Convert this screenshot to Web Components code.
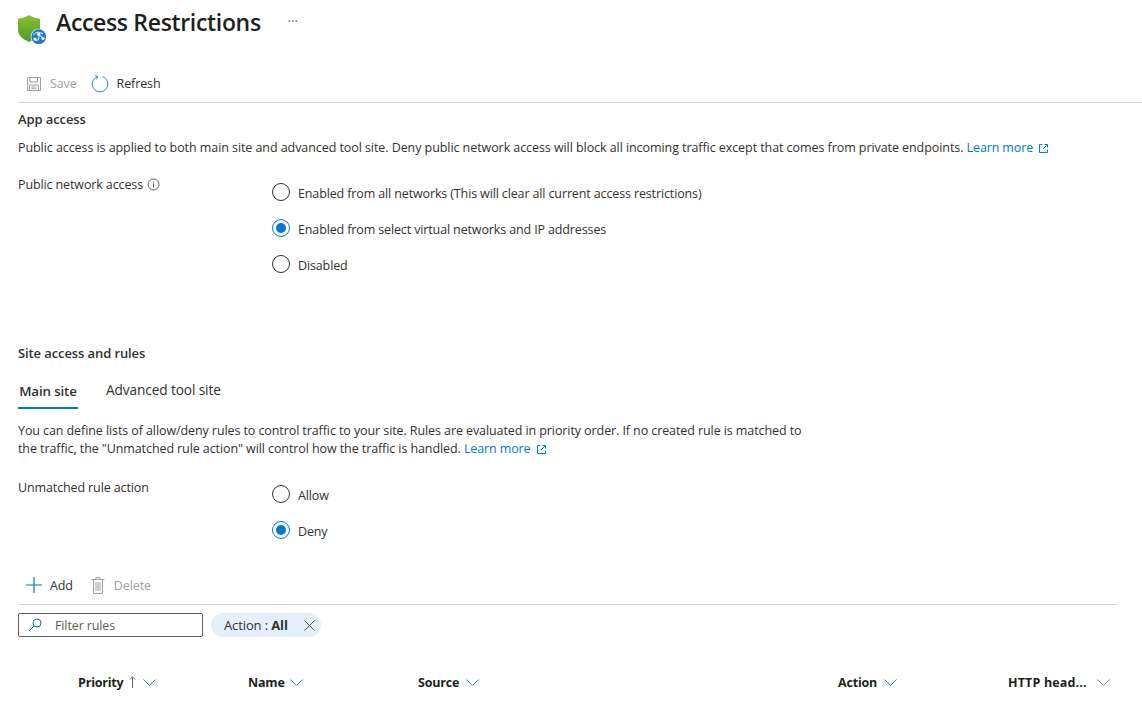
<!DOCTYPE html>
<html>
<head>
<meta charset="utf-8">
<title>Access Restrictions</title>
<style>
html,body{margin:0;height:703px;overflow:hidden;background:#fff;}
body{font-family:"Open Sans","Noto Sans",sans-serif;font-size:12.5px;letter-spacing:-.12px;color:#323130;}
</style>
</head>
<body>
<page-header>Access Restrictions</page-header>
<command-bar class="top">
  <command-button icon="save" disabled>Save</command-button>
  <command-button icon="refresh">Refresh</command-button>
</command-bar>

<page-section heading="App access" style="--head-top:7px">
  <text-block style="--top:11px">Public access is applied to both main site and advanced tool site. Deny public network access will block all incoming traffic except that comes from private endpoints. <learn-more></learn-more></text-block>
  <form-field label="Public network access" info style="--top:18px;--height:169px">
    <radio-option>Enabled from all networks (This will clear all current access restrictions)</radio-option>
    <radio-option checked>Enabled from select virtual networks and IP addresses</radio-option>
    <radio-option>Disabled</radio-option>
  </form-field>
</page-section>

<page-section heading="Site access and rules" style="--head-top:0px">
  <tab-strip></tab-strip>
  <text-block style="--top:13px;--width:800px;--spacing:-.09px">You can define lists of allow/deny rules to control traffic to your site. Rules are evaluated in priority order. If no created rule is matched to the traffic, the "Unmatched rule action" will control how the traffic is handled. <learn-more></learn-more></text-block>
  <form-field label="Unmatched rule action" style="--top:20px;--height:88px;--radio-top:7px">
    <radio-option>Allow</radio-option>
    <radio-option checked>Deny</radio-option>
  </form-field>
</page-section>

<command-bar class="rules">
  <command-button icon="add">Add</command-button>
  <command-button icon="delete" disabled>Delete</command-button>
</command-bar>
<filter-row></filter-row>
<rules-header></rules-header>

<script>
const ICONS = {
  save:`<svg width="16" height="16" viewBox="0 0 16 16" fill="none" stroke="#a19f9d" stroke-width="1"><path d="M1.500 1.500h13v13h-13z"/><path d="M4 1.500v4.500h7.500V1.500M3.500 14.500V9h9v5.500M5.500 11h5M5.500 12.700h5"/></svg>`,
  refresh:`<svg width="18" height="18" viewBox="0 0 18 18" fill="none" stroke="#1a86d9" stroke-width="1"><path d="M6.300 1.700A7.800 7.800 0 1 0 11.500 1.600"/><path d="M4.200 .5 6.800 1.700 5.600 4.300" stroke-linejoin="round"/></svg>`,
  add:`<svg width="16" height="16" viewBox="0 0 16 16" fill="none" stroke="#0078d4" stroke-width="1.200"><path d="M8 0v16M0 8h16"/></svg>`,
  delete:`<svg width="14" height="17" viewBox="0 0 14 17" fill="none" stroke="#a19f9d"><path d="M.5 2.500h13M2.500 2.500v14h9v-14M5 2.500v-2h4v2M5 5v9M7 5v9M9 5v9"/></svg>`
};

const link = `<svg width="9" height="9" viewBox="0 0 9 9" fill="none" stroke="#0078d4"><path d="M3.500.5H.5v8h8v-3M4 5 8.300.7M5.500.5h3v3"/></svg>`;

class PageHeader extends HTMLElement {
  constructor(){
    super();
    this.attachShadow({mode:'open'}).innerHTML = `
    <style>
    :host{display:flex;align-items:flex-start;height:59px;padding-left:18px;}
    svg{margin-top:15px;flex:none;}
    h1{margin:5px 0 0 8px;font:600 23px/34px "Open Sans",sans-serif;letter-spacing:-.33px;color:#201f1e;}
    span{margin:14px 0 0 27px;font-size:12px;line-height:16px;color:#605e5c;letter-spacing:.3px;}
    </style>
    <svg width="30" height="30" viewBox="0 0 30 30">
      <defs><linearGradient id="g" x1="0" y1="0" x2="0" y2="1"><stop offset="0" stop-color="#86c232"/><stop offset="1" stop-color="#4f9a2a"/></linearGradient></defs>
      <path d="M11 0c2.500 2 6 3.200 10 3.400.7 0 1 .3 1 1v10.100c0 6-4.500 9.500-11 12.500C4.500 24 0 20.500 0 14.500V4.400c0-.7.3-1 1-1C5 3.200 8.500 2 11 0z" fill="url(#g)"/>
      <circle cx="20.700" cy="21.700" r="8" fill="#fff"/>
      <circle cx="20.700" cy="21.700" r="7.400" fill="#1f77d0"/>
      <path d="M15.500 20c2-3 6-4 9.500-1M17 25c3 1 5-1 3.500-5.500M21 20c2 1 3 3 5.500 3" stroke="#cfe6fb" stroke-width="1.100" fill="none"/>
      <circle cx="20.700" cy="19.300" r="1.600" fill="#fff"/><circle cx="17" cy="24" r="1.600" fill="#fff"/><circle cx="25" cy="23.500" r="1.600" fill="#fff"/>
    </svg>
    <h1><slot></slot></h1>
    <span>···</span>`;
  }
}

class CommandBar extends HTMLElement {
  constructor(){
    super();
    this.attachShadow({mode:'open'}).innerHTML = `
    <style>
    :host{display:flex;align-items:center;gap:14px;height:43px;margin-left:18px;border-bottom:1px solid #d6d6d6;padding-left:8px;}
    :host(.top){box-sizing:border-box;height:44px;padding-top:6px;}
    :host(.rules){margin-right:24px;height:38px;gap:18px;padding-left:8px;}
    </style>
    <slot></slot>`;
  }
}

class CommandButton extends HTMLElement {
  constructor(){
    super();
    this.attachShadow({mode:'open'}).innerHTML = `
    <style>
    :host{display:inline-flex;align-items:center;gap:8px;color:#323130;}
    :host([disabled]){color:#a19f9d;}
    :host([icon=delete]){gap:9px;}
    #i{display:flex;}
    </style>
    <span id="i">${ICONS[this.getAttribute('icon')]||''}</span><slot></slot>`;
  }
}

class PageSection extends HTMLElement {
  constructor(){
    super();
    this.attachShadow({mode:'open'}).innerHTML = `
    <style>
    :host{display:block;padding-left:18px;}
    h2{margin:var(--head-top,0) 0 0;font:600 13px/18px "Open Sans",sans-serif;letter-spacing:-.1px;color:#323130;}
    </style>
    <h2>${this.getAttribute('heading')}</h2>
    <slot></slot>`;
  }
}

class TextBlock extends HTMLElement {
  constructor(){
    super();
    this.attachShadow({mode:'open'}).innerHTML = `
    <style>
    :host{display:block;margin-top:var(--top,0);max-width:var(--width,none);line-height:18px;letter-spacing:var(--spacing,-.07px);color:#323130;}
    </style>
    <slot></slot>`;
  }
}

class LearnMore extends HTMLElement {
  constructor(){
    super();
    this.attachShadow({mode:'open'}).innerHTML = `
    <style>
    :host{display:inline;color:#0078d4;letter-spacing:-.12px;}
    svg{margin-left:3px;vertical-align:-1px;}
    </style>
    Learn more ${link}`;
  }
}

class FormField extends HTMLElement {
  constructor(){
    super();
    const info = this.hasAttribute('info') ? `<svg width="13" height="13" viewBox="0 0 13 13" fill="none" stroke="#605e5c"><circle cx="6.500" cy="6.500" r="5.500"/><path d="M6.500 5.500v4M6.500 3.500v1"/></svg>` : '';
    this.attachShadow({mode:'open'}).innerHTML = `
    <style>
    :host{display:grid;grid-template-columns:254px 1fr;margin-top:var(--top,0);height:var(--height,auto);}
    #l{display:flex;align-items:center;gap:4px;height:18px;color:#323130;}
    #r{display:flex;flex-direction:column;gap:16px;padding-top:var(--radio-top,8px);}
    </style>
    <div id="l">${this.getAttribute('label')}${info}</div>
    <div id="r"><slot></slot></div>`;
  }
}

class RadioOption extends HTMLElement {
  constructor(){
    super();
    const checked = this.hasAttribute('checked');
    this.attachShadow({mode:'open'}).innerHTML = `
    <style>
    :host{display:flex;align-items:center;gap:8px;height:20px;letter-spacing:-.13px;}
    i{box-sizing:border-box;width:18px;height:18px;margin-top:-2px;border-radius:50%;border:1px solid ${checked?'#0078d4':'#323130'};display:flex;align-items:center;justify-content:center;}
    b{width:10px;height:10px;border-radius:50%;background:#0078d4;display:${checked?'block':'none'};}
    </style>
    <i><b></b></i><span><slot></slot></span>`;
  }
}

class TabStrip extends HTMLElement {
  constructor(){
    super();
    this.attachShadow({mode:'open'}).innerHTML = `
    <style>
    :host{display:flex;gap:28px;margin-top:12px;height:35px;}
    div{display:flex;align-items:center;height:33px;}
    .on{width:60px;font-size:13.300px;font-weight:600;color:#323130;border-bottom:2px solid #0078d4;justify-content:center;}
    .off{height:31px;font-size:13.700px;}
    </style>
    <div class="on">Main site</div><div class="off">Advanced tool site</div>`;
  }
}

class FilterRow extends HTMLElement {
  constructor(){
    super();
    this.attachShadow({mode:'open'}).innerHTML = `
    <style>
    :host{display:flex;align-items:center;gap:8px;margin:8px 0 0 18px;height:24px;}
    #f{box-sizing:border-box;width:185px;height:24px;border:1px solid #605e5c;border-radius:2px;display:flex;align-items:center;gap:13px;padding-left:9px;color:#605e5c;}
    #p{display:flex;align-items:center;height:24px;background:#e3f0fb;border-radius:12px;padding:0 6px 0 13px;gap:16px;color:#323130;font-size:13px;}
    b{font-weight:700;}
    svg{display:block;}
    </style>
    <div id="f">
      <svg width="14" height="14" viewBox="0 0 14 14" fill="none" stroke="#0078d4"><circle cx="9" cy="5" r="4"/><path d="M6 8 1 13"/></svg>
      <span>Filter rules</span>
    </div>
    <div id="p">
      <span>Action : <b>All</b></span>
      <svg width="11" height="11" viewBox="0 0 11 11" fill="none" stroke="#605e5c"><path d="M.5.5l10 10M10.500.5l-10 10"/></svg>
    </div>`;
  }
}

class RulesHeader extends HTMLElement {
  constructor(){
    super();
    const chev = c => `<svg width="13" height="7" viewBox="0 0 13 7" fill="none" stroke="${c}"><path d="M.5.5l6 6 6-6"/></svg>`;
    const up = `<svg class="up" width="7" height="12" viewBox="0 0 7 12" fill="none" stroke="#7a5a6a"><path d="M3.500 12V1M.8 3.500 3.500 .8 6.200 3.500"/></svg>`;
    const blue = '#2f7fb8';
    this.attachShadow({mode:'open'}).innerHTML = `
    <style>
    :host{display:grid;grid-template-columns:170px 170px 420px 170px 1fr;margin:36px 0 0 78px;height:18px;font-weight:700;letter-spacing:-.2px;color:#201f1e;}
    div{display:flex;align-items:center;gap:7px;}
    .up{margin:0 0 0 -2px;}
    .n{gap:5px;}
    .h{gap:10px;letter-spacing:.15px;}
    </style>
    <div>Priority ${up}${chev(blue)}</div>
    <div class="n">Name ${chev(blue)}</div>
    <div>Source ${chev(blue)}</div>
    <div>Action ${chev(blue)}</div>
    <div class="h">HTTP head... ${chev('#b0805a')}</div>`;
  }
}

customElements.define('page-header', PageHeader);
customElements.define('command-bar', CommandBar);
customElements.define('command-button', CommandButton);
customElements.define('page-section', PageSection);
customElements.define('text-block', TextBlock);
customElements.define('learn-more', LearnMore);
customElements.define('form-field', FormField);
customElements.define('radio-option', RadioOption);
customElements.define('tab-strip', TabStrip);
customElements.define('filter-row', FilterRow);
customElements.define('rules-header', RulesHeader);
</script>
</body>
</html>
